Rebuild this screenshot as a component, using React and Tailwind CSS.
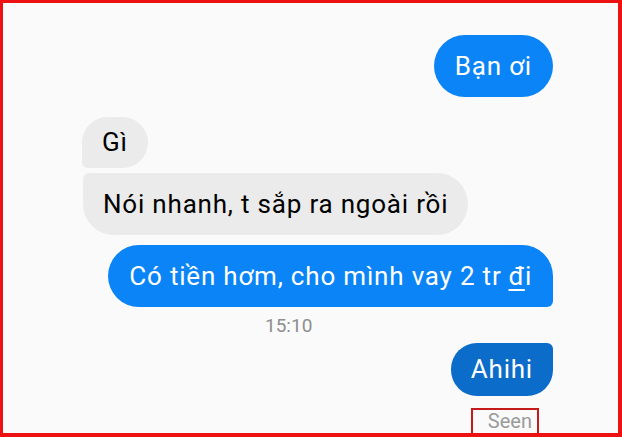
import React from 'react';

const font = { fontFamily: 'Roboto, "Noto Sans", sans-serif' };

export default function App() {
  return (
    <div
      className="w-[622px] h-[437px] bg-[#fafafa] border-[3px] border-r-4 border-b-4 border-[#ee1111] flex flex-col overflow-hidden"
      style={font}
    >
      {/* Bạn ơi */}
      <div className="flex justify-end pr-[65px] mt-[32px]">
        <div className="h-[62px] px-[21px] rounded-full bg-[#0a84f6] text-white text-[26px] tracking-[0.8px] flex items-center">
          Bạn ơi
        </div>
      </div>

      {/* Gì */}
      <div className="flex pl-[79px] mt-[20px]">
        <div className="h-[51px] px-[20px] rounded-[26px] rounded-bl-[6px] bg-[#ebebeb] text-black text-[26px] tracking-[0.8px] flex items-center">
          Gì
        </div>
      </div>

      {/* Nói nhanh */}
      <div className="flex pl-[80px] mt-[5px]">
        <div className="h-[62px] px-[20px] rounded-[31px] rounded-tl-[6px] bg-[#ebebeb] text-black text-[26px] tracking-[0.8px] flex items-center">
          Nói nhanh, t sắp ra ngoài rồi
        </div>
      </div>

      {/* Có tiền */}
      <div className="flex justify-end pr-[65px] mt-[10px]">
        <div className="h-[62px] px-[21px] rounded-[31px] rounded-br-[6px] bg-[#0a84f6] text-white text-[26px] tracking-[0.8px] flex items-center">
          Có tiền hơm, cho mình vay 2 tr <span className="underline underline-offset-4 ml-[7px]">đ</span>i
        </div>
      </div>

      {/* 15:10 */}
      <div className="pl-[262px] mt-[8px] text-[19px] leading-[22px] text-[#8e8e8e]">15:10</div>

      {/* Ahihi */}
      <div className="flex justify-end pr-[65px] mt-[6px]">
        <div className="h-[53px] px-[20px] rounded-[26px] rounded-tr-[6px] bg-[#0b6cca] text-white text-[26px] tracking-[0.8px] flex items-center">
          Ahihi
        </div>
      </div>

      {/* Seen */}
      <div className="flex justify-end pr-[79px] mt-[12px]">
        <div className="w-[68px] h-[28px] shrink-0 border-2 border-[#c41a1a] flex items-start justify-end pr-[5px] text-[20px] leading-[22px] text-[#9a9a9a]">
          Seen
        </div>
      </div>
    </div>
  );
}
